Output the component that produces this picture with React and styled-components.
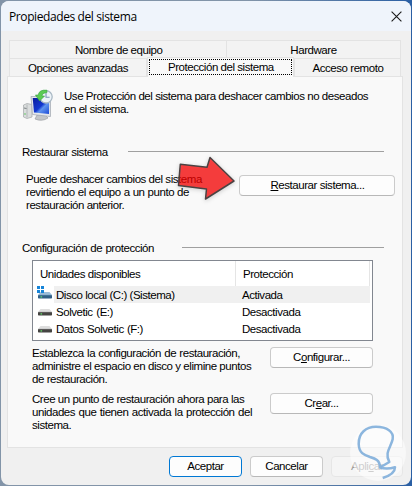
import styled, { createGlobalStyle } from "styled-components";

const drives = [
  { name: "Disco local (C:) (Sistema)", nameWidth: 117, state: "Activada", system: true, selected: true },
  { name: "Solvetic (E:)", nameWidth: 57, state: "Desactivada" },
  { name: "Datos Solvetic (F:)", nameWidth: 87, state: "Desactivada" },
];

export default function App() {
  return (
    <Desktop>
      <GlobalStyle />
      <Window>
        <TitleBar>
          <WindowTitle>Propiedades del sistema</WindowTitle>
          <CloseIcon />
        </TitleBar>
        <Tabs>
          <TabRow>
            <Tab $width={218}>
              <Label $width={86}>Nombre de equipo</Label>
            </Tab>
            <Tab $width={174}>
              <Label>Hardware</Label>
            </Tab>
          </TabRow>
          <TabRow>
            <Tab $width={138}>
              <Label $width={100}>Opciones avanzadas</Label>
            </Tab>
            <ActiveTab>
              <FocusRing>
                <Label $width={105}>Protección del sistema</Label>
              </FocusRing>
            </ActiveTab>
            <Tab $width={107}>
              <Label $width={70}>Acceso remoto</Label>
            </Tab>
          </TabRow>
        </Tabs>
        <Panel>
          <Intro>
            <RestoreIcon />
            <Text>
              <Line $width={304}>Use Protección del sistema para deshacer cambios no deseados</Line>
              <Line $width={63}>en el sistema.</Line>
            </Text>
          </Intro>
          <GroupHeading>
            <Label $width={83}>Restaurar sistema</Label>
            <Rule $width={256} />
          </GroupHeading>
          <RestoreRow>
            <Text>
              <Line $width={174}>Puede deshacer cambios del sistema</Line>
              <Line $width={163}>revirtiendo el equipo a un punto de</Line>
              <Line $width={98}>restauración anterior.</Line>
            </Text>
            <Button $width={156}>
              <Label $width={93}>
                <u>R</u>estaurar sistema...
              </Label>
            </Button>
          </RestoreRow>
          <GroupHeading>
            <Label $width={132}>Configuración de protección</Label>
            <Rule $width={202} />
          </GroupHeading>
          <DriveList>
            <ListHeader>
              <HeaderCell $width={203}>
                <Label $width={99}>Unidades disponibles</Label>
              </HeaderCell>
              <HeaderCell $width={134}>
                <Label>Protección</Label>
              </HeaderCell>
            </ListHeader>
            {drives.map((drive) => (
              <DriveRow key={drive.name}>
                <DriveIcon system={drive.system} />
                <DriveInfo $selected={drive.selected}>
                  <DriveName>
                    <Label $width={drive.nameWidth}>{drive.name}</Label>
                  </DriveName>
                  <Label>{drive.state}</Label>
                </DriveInfo>
              </DriveRow>
            ))}
          </DriveList>
          <ActionRow $top={6}>
            <Text>
              <Line $width={208}>Establezca la configuración de restauración,</Line>
              <Line $width={218}>administre el espacio en disco y elimine puntos</Line>
              <Line $width={75}>de restauración.</Line>
            </Text>
            <Button $width={103}>
              <Label>
                C<u>o</u>nfigurar...
              </Label>
            </Button>
          </ActionRow>
          <ActionRow $top={7}>
            <Text>
              <Line $width={212}>Cree un punto de restauración ahora para las</Line>
              <Line $width={220}>unidades que tienen activada la protección del</Line>
              <Line>sistema.</Line>
            </Text>
            <Button $width={103}>
              <Label>
                Cr<u>e</u>ar...
              </Label>
            </Button>
          </ActionRow>
        </Panel>
        <Footer>
          <Button $width={73} $primary>
            <Label>Aceptar</Label>
          </Button>
          <Button $width={73}>
            <Label>Cancelar</Label>
          </Button>
          <Button $width={72} disabled>
            <Label>
              Apli<u>c</u>ar
            </Label>
          </Button>
        </Footer>
      </Window>
      <Arrow />
      <Watermark />
    </Desktop>
  );
}

function CloseIcon() {
  return (
    <svg width="11" height="11" viewBox="0 0 11 11" fill="none" stroke="#1a1a1a" strokeWidth="1.1">
      <path d="M.6.6 10.4 10.4M10.4.6.6 10.4" />
    </svg>
  );
}

function RestoreIcon() {
  return (
    <svg width="32" height="32" viewBox="0 0 32 32">
      <defs>
        <linearGradient id="screen" x1="0" y1="0" x2="1" y2="1">
          <stop offset="0" stopColor="#0a1c9c" />
          <stop offset=".5" stopColor="#1237d0" />
          <stop offset=".62" stopColor="#5e93ee" />
          <stop offset="1" stopColor="#1a49d8" />
        </linearGradient>
      </defs>
      <path d="M1.5 16 5 14.5l5 1V28l-5 1.5-3.5-1.5z" fill="#dadddd" stroke="#a3a7a9" strokeWidth=".7" />
      <path d="M5 15.5v13" stroke="#b4b8ba" />
      <path d="M2 19l2.5.5" stroke="#7a7f82" />
      <circle cx="3" cy="25" r=".8" fill="#59c559" />
      <path d="M15 26h8l3 3q-6 4-13 1z" fill="#c3c6c9" stroke="#92969a" strokeWidth=".6" />
      <path d="M9 7.5 28.5 7.5 28.5 27.5 10.5 25.5z" fill="#e4e7eb" stroke="#a7adb5" strokeWidth=".8" />
      <path d="M10.7 9H27.2L27 25 12 23.5z" fill="url(#screen)" />
      <circle cx="24" cy="7.8" r="6.2" fill="#edf3f8" stroke="#aab9c5" strokeWidth="1.3" />
      <path d="M24 4V8.2h3.6" fill="none" stroke="#7893b3" strokeWidth="1.1" />
      <path d="M25 1.2Q17 .4 16.2 6h-2.8l4.2 6 5-5H20q.2-3 5-3.5z" fill="#5ccb55" stroke="#39a542" strokeWidth=".6" />
    </svg>
  );
}

function DriveIcon({ system }) {
  return (
    <svg width="16" height="17" viewBox="0 0 16 17">
      <path d="M3.5 6h9L15 9H1z" fill={system ? "#9bbcd8" : "#dedede"} />
      <rect x="1" y="9" width="14" height="3.4" rx=".7" fill={system ? "#315f86" : "#454442"} />
      <path d="M1.5 9.3h13" stroke={system ? "#5686aa" : "#777"} strokeWidth=".6" />
      <rect x="3.5" y="10.3" width="1.6" height="1.2" fill="#65e46c" />
      {system && <path d="M0 0h3v3H0zM4 0h3v3H4zM0 4h3v3H0zM4 4h3v3H4z" fill="#1684d8" />}
    </svg>
  );
}

function Arrow() {
  return (
    <ArrowShape width="62" height="50" viewBox="0 0 62 50">
      <path
        d="M5.3 9.3 32 12.3 35 2.5 59 26 30.5 44 31.5 34 3.5 30.5z"
        fill="#ff0000"
        fillOpacity=".72"
        stroke="#4b4242"
        strokeWidth="1.5"
        strokeLinejoin="round"
      />
    </ArrowShape>
  );
}

function Watermark() {
  return (
    <WatermarkShape width="58" height="58" viewBox="0 0 58 58">
      <circle cx="29" cy="29" r="28" fill="#fff" opacity=".5" />
      <path
        d="M31 43.5C31 36 26 34.5 21 33C15 31 10 29 9.7 20C9.5 9 17 2.8 27 2.8C38 2.8 45 8 43.7 15C42.5 22 35 29 40.3 38L31 43.5Q38 45.5 46 43.2Q46 50 33.7 54"
        fill="none"
        stroke="#78a9d8"
        strokeWidth="2.5"
        strokeLinejoin="round"
        opacity=".85"
      />
    </WatermarkShape>
  );
}

const GlobalStyle = createGlobalStyle`
  body {
    margin: 0;
    font-family: "Liberation Sans", Arial, sans-serif;
    font-size: 11.5px;
    line-height: 13px;
    color: #000;
  }
`;
const Desktop = styled.div`
  position: relative;
  box-sizing: border-box;
  width: 412px;
  height: 486px;
  padding: 1px;
  background: linear-gradient(90deg, #8294a8 60%, #2a5fa4);
  overflow: hidden;
`;
const Window = styled.div`
  height: 484px;
  border-radius: 8px;
  background: #f0f0f0;
  overflow: hidden;
`;
const TitleBar = styled.div`
  display: flex;
  align-items: center;
  justify-content: space-between;
  box-sizing: border-box;
  height: 30px;
  padding: 0 9px 0 8px;
  background: #eff4fb;
`;
const WindowTitle = styled.div`
  font-family: "Open Sans", "Noto Sans", sans-serif;
  font-size: 12px;
  letter-spacing: -0.4px;
  white-space: nowrap;
`;
const Label = styled.span`
  display: inline-block;
  width: ${({ $width }) => ($width ? `${$width}px` : "auto")};
  letter-spacing: -0.45px;
  text-align-last: ${({ $width }) => ($width ? "justify" : "auto")};
  white-space: nowrap;

  u {
    text-underline-offset: 1px;
  }
`;
const Line = styled(Label)`
  display: block;
`;
const Tabs = styled.div`
  padding: 9px 0 0 8px;
`;
const TabRow = styled.div`
  display: flex;
  align-items: flex-end;
  height: 18px;
`;
const Tab = styled.div`
  display: flex;
  align-items: center;
  justify-content: center;
  box-sizing: border-box;
  width: ${({ $width }) => $width}px;
  height: 18px;
  padding-top: 1px;
  border: 1px solid #e3e3e3;
  border-bottom: 0;
  background: #f3f3f3;

  & + & {
    border-left: 0;
  }
`;
const ActiveTab = styled.div`
  box-sizing: border-box;
  width: 147px;
  height: 20px;
  margin-bottom: -1px;
  padding: 1px;
  border: 1px solid #e3e3e3;
  border-bottom: 0;
  background: #f9f9f9;
  z-index: 1;
`;
const FocusRing = styled.div`
  display: flex;
  align-items: center;
  justify-content: center;
  height: 14px;
  border: 1px dotted #000;
`;
const Panel = styled.div`
  box-sizing: border-box;
  width: 396px;
  height: 372px;
  margin-left: 6px;
  padding: 12px 0 0 14px;
  border: 1px solid #e3e3e3;
  background: #f9f9f9;
`;
const Text = styled.div`
  line-height: 13px;
`;
const Intro = styled.div`
  display: flex;
  gap: 10px;
  height: 57px;

  ${Text} {
    padding-top: 1px;
  }
`;
const GroupHeading = styled.div`
  display: flex;
  align-items: center;
  justify-content: space-between;
  width: 362px;
  height: 13px;
`;
const Rule = styled.div`
  width: ${({ $width }) => $width}px;
  height: 1px;
  margin-bottom: 2px;
  background: #a0a0a0;
`;
const RestoreRow = styled.div`
  display: flex;
  justify-content: space-between;
  align-items: flex-start;
  box-sizing: border-box;
  width: 373px;
  height: 83px;
  padding: 14px 0 0 4px;

  button {
    margin-top: 2px;
  }
`;
const Button = styled.button`
  box-sizing: border-box;
  flex: none;
  width: ${({ $width }) => $width}px;
  height: 21px;
  padding: 0;
  border: 1px solid ${({ $primary }) => ($primary ? "#0078d4" : "#cbcbcb")};
  border-bottom-color: ${({ $primary }) => ($primary ? "#0078d4" : "#b8b8b8")};
  border-radius: 4px;
  background: #fdfdfd;
  color: #000;
  font: inherit;

  &:disabled {
    border-color: #e6e6e6;
    background: #f5f5f5;
    color: #9d9d9d;
  }
`;
const DriveList = styled.div`
  box-sizing: border-box;
  width: 341px;
  height: 81px;
  margin: 5px 0 0 10px;
  border: 1px solid #828790;
  background: #fff;
`;
const ListHeader = styled.div`
  display: flex;
  height: 25px;
`;
const HeaderCell = styled.div`
  display: flex;
  align-items: center;
  box-sizing: border-box;
  width: ${({ $width }) => $width}px;
  padding: 2px 0 0 7px;
  border-right: 1px solid #e5e5e5;
`;
const DriveRow = styled.div`
  display: flex;
  gap: 1px;
  height: 17px;
  padding-left: 4px;
`;
const DriveInfo = styled.div`
  display: flex;
  align-items: center;
  width: 316px;
  padding: 1px 0 0 2px;
  box-sizing: border-box;
  background: ${({ $selected }) => ($selected ? "#f0f0f0" : "transparent")};
`;
const DriveName = styled.div`
  width: 186px;
`;
const ActionRow = styled.div`
  display: flex;
  justify-content: space-between;
  align-items: flex-start;
  width: 341px;
  margin: ${({ $top }) => $top}px 0 0 10px;
`;
const Footer = styled.div`
  display: flex;
  gap: 8px;
  padding: 8px 0 0 168px;
`;
const ArrowShape = styled.svg`
  position: absolute;
  left: 175px;
  top: 155px;
  filter: drop-shadow(0 1px 2px rgba(0, 0, 0, 0.2));
`;
const WatermarkShape = styled.svg`
  position: absolute;
  left: 349px;
  top: 424px;
`;
